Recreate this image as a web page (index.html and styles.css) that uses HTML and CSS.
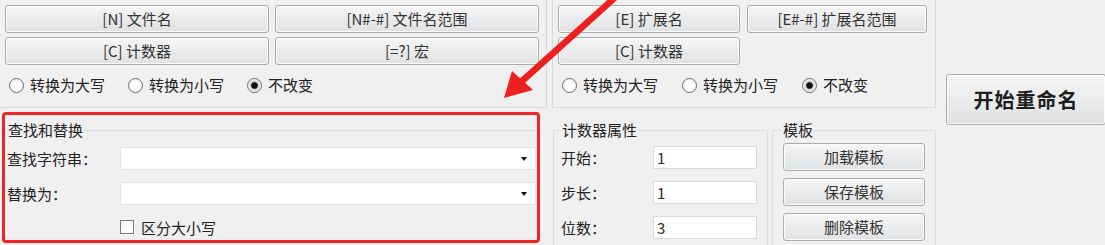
FILE: index.html
```html
<!DOCTYPE html>
<html lang="zh-CN">

<head>
    <meta charset="UTF-8">
    <meta name="viewport" content="width=device-width, initial-scale=1.0">
    <link rel="stylesheet" href="styles.css">
</head>

<body>
    <div class="window">
        <div class="main">
            <div class="top">
                <div class="panel panel-name">
                    <div class="btn-grid grid-name">
                        <button class="btn">[N] 文件名</button>
                        <button class="btn">[N#-#] 文件名范围</button>
                        <button class="btn">[C] 计数器</button>
                        <button class="btn">[=?] 宏</button>
                    </div>
                    <div class="radios">
                        <label class="radio"><span class="dot"></span>转换为大写</label>
                        <label class="radio"><span class="dot"></span>转换为小写</label>
                        <label class="radio"><span class="dot checked"></span>不改变</label>
                    </div>
                </div>
                <div class="panel panel-ext">
                    <div class="btn-grid grid-ext">
                        <button class="btn">[E] 扩展名</button>
                        <button class="btn">[E#-#] 扩展名范围</button>
                        <button class="btn">[C] 计数器</button>
                    </div>
                    <div class="radios">
                        <label class="radio wide"><span class="dot"></span>转换为大写</label>
                        <label class="radio wide"><span class="dot"></span>转换为小写</label>
                        <label class="radio wide"><span class="dot checked"></span>不改变</label>
                    </div>
                </div>
            </div>
            <div class="bottom">
                <div class="highlight">
                    <div class="group group-find">
                        <div class="group-title">查找和替换</div>
                        <div class="field first">
                            <span class="field-label">查找字符串：</span>
                            <div class="combo"><span class="caret"></span></div>
                        </div>
                        <div class="field">
                            <span class="field-label">替换为：</span>
                            <div class="combo"><span class="caret"></span></div>
                        </div>
                        <label class="check-row"><span class="box"></span>区分大小写</label>
                    </div>
                </div>
                <div class="group group-counter">
                    <div class="group-title">计数器属性</div>
                    <div class="field first">
                        <span class="counter-label">开始：</span>
                        <div class="text-input">1</div>
                    </div>
                    <div class="field">
                        <span class="counter-label">步长：</span>
                        <div class="text-input">1</div>
                    </div>
                    <div class="field">
                        <span class="counter-label">位数：</span>
                        <div class="text-input">3</div>
                    </div>
                </div>
                <div class="group group-template">
                    <div class="group-title">模板</div>
                    <button class="btn tpl-btn first">加载模板</button>
                    <button class="btn tpl-btn">保存模板</button>
                    <button class="btn tpl-btn">删除模板</button>
                </div>
            </div>
        </div>
        <div class="side">
            <button class="btn btn-start">开始重命名</button>
        </div>

        <!-- annotation arrow drawn over the window -->
        <svg class="arrow" width="1105" height="245" viewBox="0 0 1105 245">
            <line x1="630" y1="-16" x2="521" y2="82" stroke="#ee1f1f" stroke-width="6.5" />
            <polygon points="504,98 512,71 533,90" fill="#ee1f1f" />
        </svg>
    </div>
</body>

</html>
```

FILE: styles.css
```css
* {
    box-sizing: border-box;
}

html,
body {
    margin: 0;
    height: 100%;
}

body {
    background-color: #f0f0f0;
    font-family: "Noto Sans CJK SC", "Noto Sans", sans-serif;
    font-size: 15px;
    color: #222222;
    overflow: hidden;
}

.window {
    position: relative;
    display: flex;
    width: 1105px;
    height: 245px;
    overflow: hidden;
}

.main {
    width: 936px;
}

.top {
    display: flex;
    gap: 5px;
}

.panel {
    height: 108px;
    border: 1px solid #d9d9d9;
    border-top: none;
    padding: 5px 0 0 5px;
}

.panel-name {
    width: 547px;
    border-left: none;
}

.panel-ext {
    width: 384px;
}

.btn-grid {
    display: grid;
    grid-auto-rows: 28px;
    row-gap: 4px;
}

.grid-name {
    grid-template-columns: 264px 264px;
    column-gap: 6px;
}

.grid-ext {
    grid-template-columns: 182px 180px;
    column-gap: 7px;
}

.btn {
    font-family: inherit;
    font-size: 15px;
    color: #333333;
    padding: 0;
    border: 1px solid #acacac;
    border-radius: 3px;
    background: linear-gradient(#f6f6f6, #eaebec 50%, #dfe1e3);
    box-shadow: inset 0 0 0 1px #fbfbfb;
    line-height: 26px;
}

.radios {
    display: flex;
    align-items: center;
    height: 20px;
    margin-top: 10px;
    padding-left: 4px;
}

.radio {
    display: flex;
    align-items: center;
    gap: 6px;
    width: 119px;
    line-height: 20px;
}

.radio.wide {
    width: 120px;
}

.dot {
    width: 15px;
    height: 15px;
    border: 1.5px solid #6e6e6e;
    border-radius: 50%;
    background: radial-gradient(#ffffff 40%, #e4e4e4);
    flex-shrink: 0;
}

.dot.checked {
    background: radial-gradient(#111111 0 2.8px, #cfcfcf 3.8px, #f2f2f2 6px);
}

.bottom {
    display: flex;
    align-items: flex-start;
}

.highlight {
    width: 538px;
    height: 131px;
    margin: 4px 0 0 2px;
    border: 3px solid #f02424;
    border-radius: 4px;
    padding: 15px 0 0 2px;
}

.group {
    border: 1px solid #dcdcdc;
}

.group-title {
    width: fit-content;
    margin-top: -11px;
    line-height: 20px;
    background-color: #f0f0f0;
    padding: 0 1px;
}

.group-find {
    border-left: none;
    border-right: none;
    border-bottom: none;
}

.field {
    display: flex;
    align-items: center;
    height: 23px;
    margin-top: 12px;
}

.field.first {
    margin-top: 7px;
}

.field-label {
    width: 113px;
}

.combo {
    position: relative;
    width: 416px;
    height: 23px;
    background-color: #ffffff;
    border: 1px solid #e2e2e2;
}

.caret {
    position: absolute;
    right: 8px;
    top: 9px;
    border-left: 3px solid transparent;
    border-right: 3px solid transparent;
    border-top: 4px solid #111111;
}

.check-row {
    display: flex;
    align-items: center;
    gap: 7px;
    height: 20px;
    margin-top: 12px;
    padding-left: 113px;
}

.box {
    width: 14px;
    height: 14px;
    border: 1.5px solid #7a7a7a;
    background: linear-gradient(#f4f4f4, #ffffff);
}

.group-counter {
    width: 215px;
    height: 116px;
    margin: 22px 0 0 13px;
    padding-left: 7px;
    border-bottom: none;
}

.counter-label {
    width: 92px;
}

.text-input {
    width: 104px;
    height: 23px;
    background-color: #ffffff;
    border: 1px solid #dadada;
    padding-left: 3px;
    line-height: 21px;
    color: #3a2a1a;
}

.group-counter .field.first {
    margin-top: 6px;
}

.group-template {
    display: flex;
    flex-direction: column;
    width: 164px;
    height: 116px;
    margin: 22px 0 0 4px;
    padding-left: 9px;
    border-bottom: none;
}

.tpl-btn {
    width: 142px;
    height: 28px;
    margin: 7px 0 0 1px;
    flex-shrink: 0;
}

.tpl-btn.first {
    margin-top: 3px;
}

.side {
    padding: 74px 0 0 10px;
}

.btn-start {
    width: 160px;
    height: 51px;
    font-size: 20px;
    font-weight: bold;
    color: #1e1e1e;
    letter-spacing: 1px;
}

.arrow {
    position: absolute;
    left: 0;
    top: 0;
    pointer-events: none;
}
```
